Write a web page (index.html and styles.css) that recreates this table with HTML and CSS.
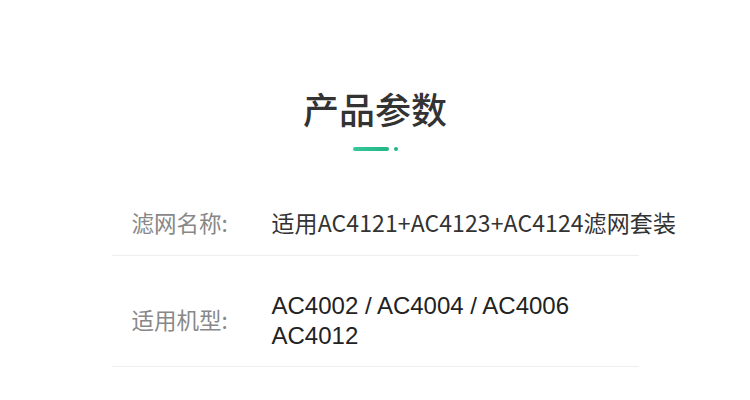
FILE: index.html
```html
<!DOCTYPE html>
<html>
<head>
    <meta charset="utf-8">
    <title>产品参数</title>
    <link rel="stylesheet" href="styles.css">
</head>
<body>
    <div class="params">
        <div class="params-head">
            <h2 class="params-title">产品参数</h2>
            <div class="accent">
                <span class="accent-line"></span>
                <span class="accent-dot"></span>
            </div>
        </div>

        <div class="param-row">
            <div class="param-label">滤网名称:</div>
            <div class="param-value cjk">适用AC4121+AC4123+AC4124滤网套装</div>
        </div>

        <div class="param-row">
            <div class="param-label">适用机型:</div>
            <div class="param-value latin">AC4002 / AC4004 / AC4006<br>AC4012</div>
        </div>
    </div>
</body>
</html>
```

FILE: styles.css
```css
body { margin: 0; background: #fff; font-family: "Noto Sans CJK SC", "Noto Sans", sans-serif; color: #333; }
.params { width: 527px; margin: 0 auto; padding-top: 83px; }
.params-head { display: flex; flex-direction: column; align-items: center; }
.params-title { margin: 0; font-size: 36px; line-height: 50px; font-weight: 500; color: #333; }
.accent { display: flex; align-items: center; gap: 5px; margin-top: 14px; }
.accent-line { width: 36px; height: 4px; border-radius: 2px; background: linear-gradient(90deg, #34c89a, #22b585); }
.accent-dot { width: 4px; height: 4px; border-radius: 50%; background: #22b585; }
.param-row { display: flex; align-items: center; padding: 35px 20px 16px; border-bottom: 1px solid #eeeeee; }
.params-head + .param-row { margin-top: 23px; }
.param-row:last-child { padding-bottom: 15px; }
.param-label { width: 140px; flex-shrink: 0; font-size: 22.5px; line-height: 26px; padding-bottom: 4px; color: #888; }
.param-value { white-space: nowrap; font-size: 23px; line-height: 30px; color: #333; }
.param-value.cjk { line-height: 26px; padding-bottom: 4px; letter-spacing: 0.1px; }
.param-value.latin { font-family: "Liberation Sans", Arial, sans-serif; font-size: 24px; color: #222; }
```
